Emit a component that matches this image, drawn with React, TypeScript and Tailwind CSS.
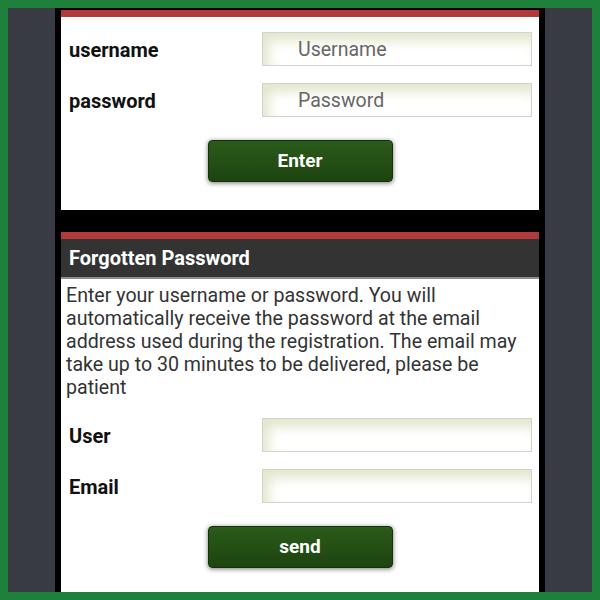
import React from "react";

const font = { fontFamily: "Roboto, 'Noto Sans', sans-serif" };

function Field({ label, placeholder, type = "text" }: { label: string; placeholder?: string; type?: string }) {
  return (
    <div className="flex items-center justify-between pl-2 pr-[7px]">
      <label className="text-[20px] font-bold text-[#111] pt-[2px]">{label}</label>
      <input
        type={type}
        placeholder={placeholder}
        className="w-[270px] h-[34px] border border-[#d2d3cc] bg-white pl-[35px] text-[19.5px] text-[#555] placeholder:text-[#666] outline-none shadow-[inset_6px_8px_12px_#e2e7cc]"
      />
    </div>
  );
}

function GreenButton({ children }: { children: React.ReactNode }) {
  return (
    <div className="flex justify-center">
      <button className="w-[185px] h-[42px] rounded-[4px] border border-[#163009] bg-gradient-to-b from-[#2b5b1a] to-[#1d4410] text-[19px] font-bold text-white shadow-[0_1px_5px_rgba(0,0,0,0.55)]">
        {children}
      </button>
    </div>
  );
}

export default function App() {
  return (
    <div className="w-[600px] h-[600px] bg-[#1f803c] p-[8px]" style={font}>
      <div className="h-full bg-[#383a44] px-[47px]">
        <div className="h-full bg-black px-[6px] pt-[2px] flex flex-col">
          {/* login card */}
          <div className="border-t-[7px] border-[#b23a3a] bg-white h-[200px] pt-[15px]">
            <div className="flex flex-col gap-[17px]">
              <Field label="username" placeholder="Username" />
              <Field label="password" placeholder="Password" type="password" />
            </div>
            <div className="mt-[23px]">
              <GreenButton>Enter</GreenButton>
            </div>
          </div>

          {/* forgotten password card */}
          <div className="mt-[22px] flex-1 border-t-[7px] border-[#b23a3a] bg-white">
            <div className="h-[40px] bg-[#333333] border-b-2 border-[#8d8d8d] flex items-center pl-2">
              <h2 className="text-[20px] font-bold text-white">Forgotten Password</h2>
            </div>
            <p className="px-[5px] pt-[5px] text-[19.6px] leading-[23px] text-[#333]">
              Enter your username or password. You will automatically receive the password at the email address used during the registration. The email may take up to 30 minutes to be delivered, please be patient
            </p>
            <div className="mt-[19px] flex flex-col gap-[17px]">
              <Field label="User" />
              <Field label="Email" />
            </div>
            <div className="mt-[23px]">
              <GreenButton>send</GreenButton>
            </div>
          </div>
        </div>
      </div>
    </div>
  );
}
